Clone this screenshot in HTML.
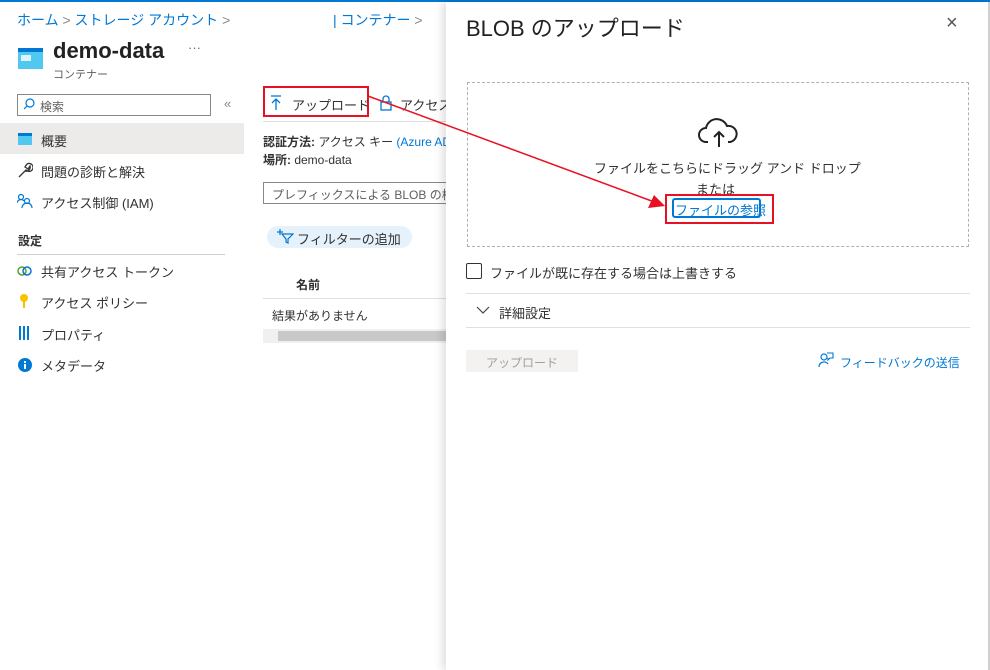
<!DOCTYPE html><html><head><meta charset="utf-8"><style>
*{margin:0;padding:0;box-sizing:border-box}
body{width:990px;height:670px;overflow:hidden;background:#fff;font-family:"Liberation Sans","Noto Sans CJK JP",sans-serif;color:#323130;position:relative;font-size:13px}
.a{position:absolute;white-space:nowrap}
.blue{color:#0078d4}
</style></head><body>
<div class="a" style="left:0;top:0;width:990px;height:2px;background:#0078d4"></div>
<div class="a blue" style="left:17px;top:10px;font-size:14px">ホーム <span style="color:#888">&gt;</span> ストレージ アカウント <span style="color:#888">&gt;</span></div>
<div class="a blue" style="left:333px;top:10px;font-size:14px">| コンテナー <span style="color:#888">&gt;</span></div>
<svg class="a" style="left:18px;top:48px" width="25" height="21"><rect x="0" y="0" width="25" height="21" fill="#50c8f0"/><rect x="0" y="0" width="25" height="4" fill="#0078d4"/><rect x="3" y="7" width="10" height="6" fill="#fff" opacity=".8"/></svg>
<div class="a" style="left:53px;top:38px;font-size:22px;font-weight:bold;color:#222">demo-data</div>
<div class="a" style="left:188px;top:40px;color:#666">···</div>
<div class="a" style="left:53px;top:66px;font-size:11px;color:#605e5c">コンテナー</div>
<div class="a" style="left:17px;top:94px;width:194px;height:22px;border:1px solid #8a8886;font-size:12px;padding:3px 0 0 22px;color:#605e5c">検索</div>
<svg class="a" style="left:23px;top:98px" width="12" height="12"><circle cx="7" cy="5" r="4" fill="none" stroke="#0078d4" stroke-width="1.2"/><path d="M4 8L1 11" stroke="#0078d4" stroke-width="1.2"/></svg>
<div class="a" style="left:224px;top:96px;color:#888">«</div>
<div class="a" style="left:0;top:123px;width:244px;height:31px;background:#edebe9"></div>
<svg class="a" style="left:18px;top:133px" width="14" height="12"><rect width="14" height="12" fill="#50c8f0"/><rect width="14" height="3" fill="#0078d4"/></svg>
<div class="a" style="left:41px;top:131px">概要</div>
<svg class="a" style="left:17px;top:162px" width="16" height="16"><path d="M2 15L9 8M9 8a4 4 0 1 0 1-6l-2 3 3 2 2-3a4 4 0 0 1-5 5z" fill="none" stroke="#333" stroke-width="1.3"/></svg>
<div class="a" style="left:41px;top:162px">問題の診断と解決</div>
<svg class="a" style="left:17px;top:194px" width="16" height="14"><circle cx="4" cy="3" r="2.5" fill="none" stroke="#0078d4" stroke-width="1.2"/><path d="M0 9a4 4 0 0 1 7-2" fill="none" stroke="#0078d4" stroke-width="1.2"/><circle cx="10" cy="7" r="2.5" fill="none" stroke="#0078d4" stroke-width="1.2"/><path d="M5 14a5 5 0 0 1 10 0" fill="none" stroke="#0078d4" stroke-width="1.2"/></svg>
<div class="a" style="left:41px;top:193px">アクセス制御 (IAM)</div>
<div class="a" style="left:18px;top:232px;font-size:12px;font-weight:bold">設定</div>
<div class="a" style="left:17px;top:254px;width:208px;height:1px;background:#d0d0d0"></div>
<svg class="a" style="left:17px;top:265px" width="16" height="12"><circle cx="5" cy="6" r="4" fill="none" stroke="#5c9e31" stroke-width="1.5"/><circle cx="10" cy="6" r="4" fill="none" stroke="#0078d4" stroke-width="1.5"/></svg>
<div class="a" style="left:41px;top:262px">共有アクセス トークン</div>
<svg class="a" style="left:20px;top:294px" width="8" height="14"><circle cx="4" cy="4" r="4" fill="#f8c400"/><rect x="3" y="6" width="2" height="8" fill="#f8c400"/></svg>
<div class="a" style="left:41px;top:293px">アクセス ポリシー</div>
<svg class="a" style="left:19px;top:326px" width="12" height="14"><rect x="0" width="2" height="14" fill="#0078d4"/><rect x="4" width="2" height="14" fill="#0078d4"/><rect x="8" width="2" height="14" fill="#0078d4"/></svg>
<div class="a" style="left:41px;top:325px">プロパティ</div>
<svg class="a" style="left:18px;top:358px" width="14" height="14"><circle cx="7" cy="7" r="7" fill="#0078d4"/><rect x="6" y="6" width="2" height="5" fill="#fff"/><rect x="6" y="3" width="2" height="2" fill="#fff"/></svg>
<div class="a" style="left:41px;top:356px">メタデータ</div>
<div class="a" style="left:263px;top:86px;width:106px;height:31px;border:2px solid #e81123"></div>
<svg class="a" style="left:270px;top:95px" width="12" height="15"><path d="M1 1H11M6 4V15M2 8l4-4 4 4" fill="none" stroke="#0078d4" stroke-width="1.3"/></svg>
<div class="a" style="left:292px;top:95px">アップロード</div>
<svg class="a" style="left:380px;top:95px" width="12" height="16"><path d="M3 7V4a3 3 0 0 1 6 0v3" fill="none" stroke="#0078d4" stroke-width="1.3"/><rect x="1" y="7" width="10" height="8" fill="none" stroke="#0078d4" stroke-width="1.3"/></svg>
<div class="a" style="left:400px;top:95px">アクセス</div>
<div class="a" style="left:263px;top:121px;width:185px;height:1px;background:#e1dfdd"></div>
<div class="a" style="left:263px;top:133px;font-size:12px"><b>認証方法:</b> アクセス キー <span class="blue">(Azure AD</span></div>
<div class="a" style="left:263px;top:151px;font-size:12px"><b>場所:</b> demo-data</div>
<div class="a" style="left:263px;top:182px;width:190px;height:22px;border:1px solid #8a8886;font-size:12px;padding:3px 8px;color:#605e5c">プレフィックスによる BLOB の検</div>
<div class="a" style="left:267px;top:226px;width:145px;height:22px;border-radius:11px;background:#e5f1fb;font-size:13px;padding:3px 0 0 30px">フィルターの追加</div>
<svg class="a" style="left:276px;top:228px" width="18" height="16"><path d="M1 4H7M4 1V7" stroke="#0078d4" stroke-width="1.2"/><path d="M6 6H17L12 11V15L10 14V11Z" fill="none" stroke="#0078d4" stroke-width="1.2"/></svg>
<div class="a" style="left:296px;top:276px;font-size:12px;font-weight:bold">名前</div>
<div class="a" style="left:263px;top:298px;width:185px;height:1px;background:#e1dfdd"></div>
<div class="a" style="left:272px;top:307px;font-size:12px">結果がありません</div>
<div class="a" style="left:263px;top:329px;width:185px;height:14px;background:#f0f0f0"></div>
<div class="a" style="left:278px;top:331px;width:170px;height:10px;background:#c8c8c8"></div>
<div class="a" style="left:446px;top:2px;width:544px;height:668px;background:#fff;box-shadow:-4px 0 8px rgba(0,0,0,.12);border-right:2px solid #d0d0d0"></div>
<div class="a" style="left:466px;top:11px;font-size:22px;color:#222">BLOB のアップロード</div>
<div class="a" style="left:946px;top:12px;font-size:20px;color:#555">×</div>
<div class="a" style="left:467px;top:82px;width:502px;height:165px;border:1px dashed #b0b0b0"></div>
<svg class="a" style="left:698px;top:117px" width="42" height="32"><path d="M10 25H8a7 7 0 0 1 0-14 11 11 0 0 1 21-2 8 8 0 0 1 3 16h-2" fill="none" stroke="#222" stroke-width="2"/><path d="M21 30V15M16 20l5-5 5 5" fill="none" stroke="#222" stroke-width="2"/></svg>
<div class="a" style="left:594px;top:158px;font-size:13px">ファイルをこちらにドラッグ アンド ドロップ</div>
<div class="a" style="left:696px;top:179px;font-size:13px">または</div>
<div class="a" style="left:665px;top:194px;width:109px;height:30px;border:2px solid #e81123"></div>
<div class="a blue" style="left:672px;top:198px;width:89px;height:20px;border:2px solid #0078d4;border-radius:3px;font-size:13px;padding:0 1px">ファイルの参照</div>
<svg class="a" style="left:0;top:0" width="990" height="670"><path d="M368 96L657 203" stroke="#e81123" stroke-width="1.5"/><path d="M665 206L648 208L654 195Z" fill="#e81123"/></svg>
<div class="a" style="left:466px;top:263px;width:16px;height:16px;border:1px solid #333;border-radius:2px"></div>
<div class="a" style="left:490px;top:263px;font-size:13px">ファイルが既に存在する場合は上書きする</div>
<div class="a" style="left:466px;top:293px;width:504px;height:1px;background:#e1dfdd"></div>
<svg class="a" style="left:476px;top:306px" width="14" height="8"><path d="M1 1L7 7L13 1" fill="none" stroke="#444" stroke-width="1.2"/></svg>
<div class="a" style="left:499px;top:303px;font-size:13px">詳細設定</div>
<div class="a" style="left:466px;top:327px;width:504px;height:1px;background:#e1dfdd"></div>
<div class="a" style="left:466px;top:350px;width:112px;height:22px;background:#f3f2f1;color:#a19f9d;font-size:12px;padding:4px 0 0 20px">アップロード</div>
<svg class="a" style="left:818px;top:352px" width="16" height="16"><circle cx="6" cy="5" r="3" fill="none" stroke="#0078d4" stroke-width="1.2"/><path d="M1 15a5 5 0 0 1 9-3" fill="none" stroke="#0078d4" stroke-width="1.2"/><path d="M9 1H15V6H12L10 8V6" fill="none" stroke="#0078d4" stroke-width="1.1"/></svg>
<div class="a blue" style="left:840px;top:354px;font-size:12px">フィードバックの送信</div>
</body></html>
